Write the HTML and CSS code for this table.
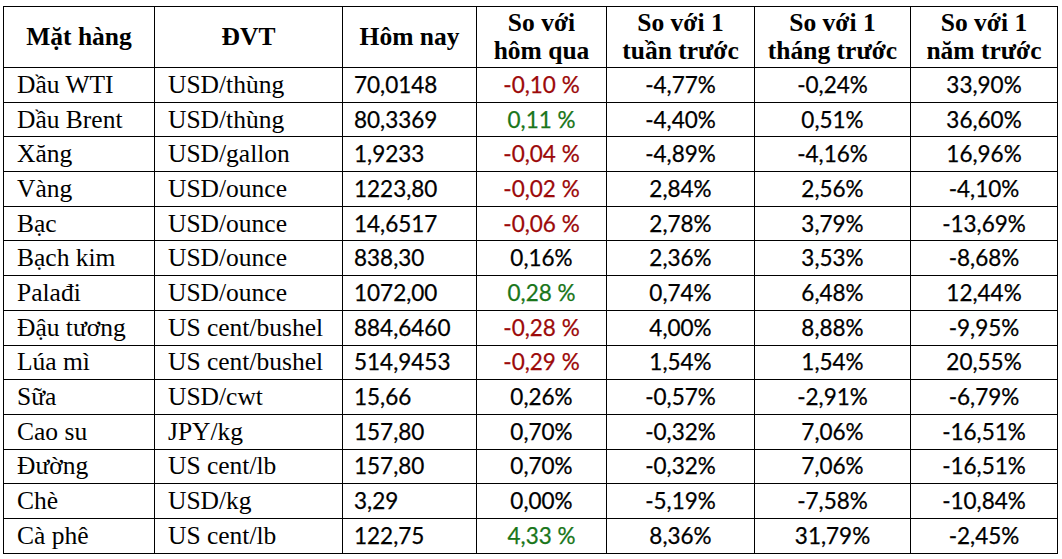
FILE: index.html
```html
<!DOCTYPE html>
<html lang="vi">
<head>
<meta charset="utf-8">
<title>Giá hàng hóa</title>
<link rel="stylesheet" href="styles.css">
</head>
<body>
<table class="price-table">
  <colgroup>
    <col class="c1"><col class="c2"><col class="c3"><col class="c4"><col class="c5"><col class="c6"><col class="c7">
  </colgroup>
  <thead>
    <tr>
      <th>Mặt hàng</th>
      <th>ĐVT</th>
      <th>Hôm nay</th>
      <th>So với<br>hôm qua</th>
      <th>So với 1<br>tuần trước</th>
      <th>So với 1<br>tháng trước</th>
      <th>So với 1<br>năm trước</th>
    </tr>
  </thead>
  <tbody>
    <tr><td class="name">Dầu WTI</td><td class="unit">USD/thùng</td><td class="num left">70,0148</td><td class="num down">-0,10 %</td><td class="num">-4,77%</td><td class="num">-0,24%</td><td class="num">33,90%</td></tr>
    <tr><td class="name">Dầu Brent</td><td class="unit">USD/thùng</td><td class="num left">80,3369</td><td class="num up">0,11 %</td><td class="num">-4,40%</td><td class="num">0,51%</td><td class="num">36,60%</td></tr>
    <tr><td class="name">Xăng</td><td class="unit">USD/gallon</td><td class="num left">1,9233</td><td class="num down">-0,04 %</td><td class="num">-4,89%</td><td class="num">-4,16%</td><td class="num">16,96%</td></tr>
    <tr><td class="name">Vàng</td><td class="unit">USD/ounce</td><td class="num left">1223,80</td><td class="num down">-0,02 %</td><td class="num">2,84%</td><td class="num">2,56%</td><td class="num">-4,10%</td></tr>
    <tr><td class="name">Bạc</td><td class="unit">USD/ounce</td><td class="num left">14,6517</td><td class="num down">-0,06 %</td><td class="num">2,78%</td><td class="num">3,79%</td><td class="num">-13,69%</td></tr>
    <tr><td class="name">Bạch kim</td><td class="unit">USD/ounce</td><td class="num left">838,30</td><td class="num">0,16%</td><td class="num">2,36%</td><td class="num">3,53%</td><td class="num">-8,68%</td></tr>
    <tr><td class="name">Palađi</td><td class="unit">USD/ounce</td><td class="num left">1072,00</td><td class="num up">0,28 %</td><td class="num">0,74%</td><td class="num">6,48%</td><td class="num">12,44%</td></tr>
    <tr><td class="name">Đậu tương</td><td class="unit">US cent/bushel</td><td class="num left">884,6460</td><td class="num down">-0,28 %</td><td class="num">4,00%</td><td class="num">8,88%</td><td class="num">-9,95%</td></tr>
    <tr><td class="name">Lúa mì</td><td class="unit">US cent/bushel</td><td class="num left">514,9453</td><td class="num down">-0,29 %</td><td class="num">1,54%</td><td class="num">1,54%</td><td class="num">20,55%</td></tr>
    <tr><td class="name">Sữa</td><td class="unit">USD/cwt</td><td class="num left">15,66</td><td class="num">0,26%</td><td class="num">-0,57%</td><td class="num">-2,91%</td><td class="num">-6,79%</td></tr>
    <tr><td class="name">Cao su</td><td class="unit">JPY/kg</td><td class="num left">157,80</td><td class="num">0,70%</td><td class="num">-0,32%</td><td class="num">7,06%</td><td class="num">-16,51%</td></tr>
    <tr><td class="name">Đường</td><td class="unit">US cent/lb</td><td class="num left">157,80</td><td class="num">0,70%</td><td class="num">-0,32%</td><td class="num">7,06%</td><td class="num">-16,51%</td></tr>
    <tr><td class="name">Chè</td><td class="unit">USD/kg</td><td class="num left">3,29</td><td class="num">0,00%</td><td class="num">-5,19%</td><td class="num">-7,58%</td><td class="num">-10,84%</td></tr>
    <tr><td class="name">Cà phê</td><td class="unit">US cent/lb</td><td class="num left">122,75</td><td class="num up">4,33 %</td><td class="num">8,36%</td><td class="num">31,79%</td><td class="num">-2,45%</td></tr>
  </tbody>
</table>
</body>
</html>
```
FILE: styles.css
```css
html, body {
  margin: 0;
  padding: 0;
  background: #ffffff;
}

body {
  padding: 6px 0 0 3px;
}

.price-table {
  border-collapse: collapse;
  table-layout: fixed;
  width: 1054px;
  color: #000;
}

.c1 { width: 151px; }
.c2 { width: 188px; }
.c3 { width: 134px; }
.c4 { width: 130px; }
.c5 { width: 148px; }
.c6 { width: 156px; }
.c7 { width: 147px; }

.price-table th,
.price-table td {
  border: 1px solid #000;
  padding: 0;
  vertical-align: middle;
  white-space: nowrap;
  overflow: hidden;
}

.price-table thead tr {
  height: 61px;
}

.price-table th {
  font-family: "Liberation Serif", "Times New Roman", serif;
  font-weight: bold;
  font-size: 25.5px;
  line-height: 28px;
  text-align: center;
}

.price-table tbody tr {
  height: 34.7px;
}

.name,
.unit {
  font-family: "Liberation Serif", "Times New Roman", serif;
  font-size: 25.5px;
  line-height: 30px;
  padding-left: 13px !important;
  text-align: left;
}

.num {
  font-family: Lato, "Open Sans", sans-serif;
  font-size: 22.5px;
  line-height: 30px;
  text-align: center;
  -webkit-text-stroke: 0.25px currentColor;
}

.num.left {
  text-align: left;
  padding-left: 11px !important;
}

.down { color: #9c0a0a; }
.up { color: #1a761a; }
```
